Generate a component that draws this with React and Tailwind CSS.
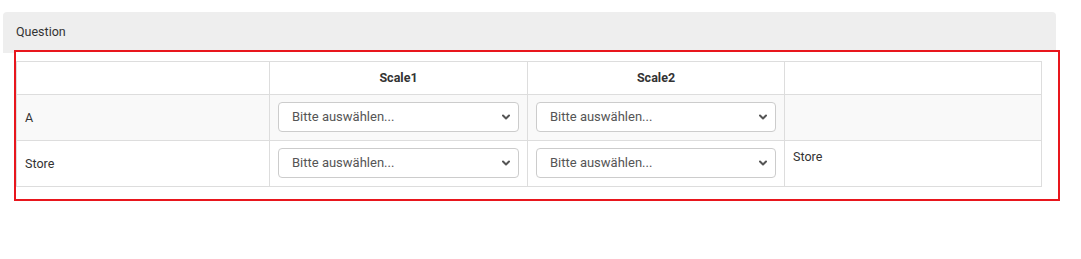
import React from "react";

function Chevron() {
  return (
    <svg
      className="pointer-events-none absolute right-[8px] top-1/2 -translate-y-1/2"
      width="10"
      height="7"
      viewBox="0 0 10 7"
      fill="none"
    >
      <path d="M2 2 L5 5 L8 2" stroke="#555" strokeWidth="2" strokeLinecap="round" strokeLinejoin="round" />
    </svg>
  );
}

function Select() {
  return (
    <div className="relative w-full">
      <select
        defaultValue=""
        className="h-[30px] w-full appearance-none rounded-[4px] border border-[#cccccc] bg-white pl-[13px] pr-[24px] text-[13px] leading-[18px] text-[#555555] outline-none"
        style={{ fontFamily: "Roboto, 'Liberation Sans', sans-serif" }}
      >
        <option value="">Bitte auswählen...</option>
      </select>
      <Chevron />
    </div>
  );
}

export default function App() {
  const font = { fontFamily: "Roboto, 'Liberation Sans', sans-serif" };
  return (
    <div className="h-[259px] w-[1081px] bg-white pt-[12px] text-[#333333]" style={font}>
      <div className="ml-[3px] flex h-[41px] w-[1053px] items-center rounded-t-[4px] bg-[#eeeeee] pl-[13px] text-[12.5px]">
        Question
      </div>
      <div className="-mt-[3px] ml-[14px] h-[151px] w-[1046px] border-2 border-[#e8161d] bg-white pl-0 pt-[9px]">
        <table className="w-[1025px] table-fixed border-collapse text-[12.5px] leading-[18px]">
          <colgroup>
            <col className="w-[253px]" />
            <col className="w-[258px]" />
            <col className="w-[257px]" />
            <col className="w-[257px]" />
          </colgroup>
          <thead>
            <tr className="h-[33px] bg-white">
              <th className="border border-[#dddddd] px-[8px] py-0"></th>
              <th className="border border-[#dddddd] px-[8px] py-0 text-center font-bold">Scale1</th>
              <th className="border border-[#dddddd] px-[8px] py-0 text-center font-bold">Scale2</th>
              <th className="border border-[#dddddd] px-[8px] py-0"></th>
            </tr>
          </thead>
          <tbody>
            <tr className="bg-[#f9f9f9]">
              <td className="border border-[#dddddd] px-[8px] align-middle">A</td>
              <td className="border border-[#dddddd] px-[8px] pt-[7px] pb-[8px]"><Select /></td>
              <td className="border border-[#dddddd] px-[8px] pt-[7px] pb-[8px]"><Select /></td>
              <td className="border border-[#dddddd] px-[8px] pt-[7px] pb-[8px] align-top"></td>
            </tr>
            <tr className="bg-white">
              <td className="border border-[#dddddd] px-[8px] align-middle">Store</td>
              <td className="border border-[#dddddd] px-[8px] pt-[7px] pb-[8px]"><Select /></td>
              <td className="border border-[#dddddd] px-[8px] pt-[7px] pb-[8px]"><Select /></td>
              <td className="border border-[#dddddd] px-[8px] pt-[7px] pb-[8px] align-top">Store</td>
            </tr>
          </tbody>
        </table>
      </div>
    </div>
  );
}
